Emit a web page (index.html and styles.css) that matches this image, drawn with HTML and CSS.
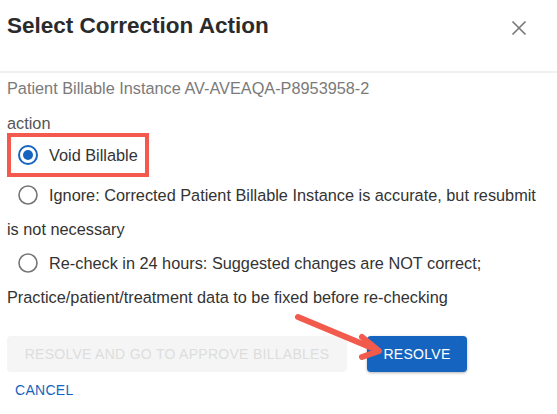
FILE: index.html
```html
<!DOCTYPE html>
<html lang="en">
<head>
<meta charset="utf-8">
<title>Select Correction Action</title>
<link rel="stylesheet" href="styles.css">
</head>
<body>
<div class="dialog">
  <header class="dialog-header">
    <h2 class="dialog-title">Select Correction Action</h2>
    <button class="close-btn" aria-label="Close">
      <svg viewBox="0 0 24 24" width="24" height="24"><path d="M5.5 5.5 L18.5 18.5 M18.5 5.5 L5.5 18.5" stroke="#7a7a7a" stroke-width="1.7" fill="none"/></svg>
    </button>
  </header>
  <div class="dialog-body">
    <p class="instance">Patient Billable Instance AV-AVEAQA-P8953958-2</p>
    <div class="field-label">action</div>
    <div class="options">
      <label class="option option-first">
        <span class="radio checked"><svg viewBox="0 0 24 24" width="24" height="24"><circle cx="12" cy="12" r="9" fill="none" stroke="#1565c0" stroke-width="2"/><circle cx="12" cy="12" r="5" fill="#1565c0"/></svg></span>Void Billable
        <span class="highlight"></span>
      </label>
      <label class="option">
        <span class="radio"><svg viewBox="0 0 24 24" width="24" height="24"><circle cx="12" cy="12" r="9" fill="none" stroke="#757575" stroke-width="1.6"/></svg></span>Ignore: Corrected Patient Billable Instance is accurate, but resubmit is not necessary
      </label>
      <label class="option">
        <span class="radio"><svg viewBox="0 0 24 24" width="24" height="24"><circle cx="12" cy="12" r="9" fill="none" stroke="#757575" stroke-width="1.6"/></svg></span>Re-check in 24 hours: Suggested changes are NOT correct; Practice/patient/treatment data to be fixed before re-checking
      </label>
    </div>
  </div>
  <div class="actions">
    <div class="action-row">
      <button class="btn btn-disabled" disabled>Resolve and go to approve billables</button>
      <button class="btn btn-primary">Resolve</button>
    </div>
    <button class="btn btn-text">Cancel</button>
  </div>
  <svg class="arrow" width="557" height="414" viewBox="0 0 557 414">
    <g stroke="#f25a4c" stroke-width="6" stroke-linecap="round" stroke-linejoin="round" fill="none">
      <path d="M298 317 L377 350"/>
      <path d="M362 337 L379 351 L362 357"/>
    </g>
  </svg>
</div>
</body>
</html>
```

FILE: styles.css
```css
* { box-sizing: border-box; }

html, body {
  margin: 0;
  padding: 0;
  background: #ffffff;
}

body {
  font-family: "Liberation Sans", Arial, Helvetica, sans-serif;
  color: #333333;
}

.dialog {
  position: relative;
  width: 557px;
  height: 414px;
  overflow: hidden;
  background: #ffffff;
}

.dialog-header {
  display: flex;
  justify-content: space-between;
  align-items: flex-start;
  height: 73px;
  padding: 13px 26px 0 7px;
  border-bottom: 2px solid #f0f0f0;
}

.dialog-title {
  margin: 0;
  font-size: 22.5px;
  line-height: 26px;
  font-weight: 700;
  color: #2b2b2b;
}

.close-btn {
  display: flex;
  padding: 0;
  margin-top: 3px;
  border: none;
  background: transparent;
  cursor: pointer;
}

.dialog-body {
  padding: 0 12px 0 7px;
}

.instance {
  margin: 3px 0 0;
  font-size: 16.3px;
  line-height: 24px;
  color: #7a7a7a;
}

.field-label {
  margin-top: 11px;
  font-size: 16.3px;
  line-height: 24px;
  color: #555555;
}

.options {
  margin-top: 3px;
}

.option {
  position: relative;
  display: block;
  font-size: 16.3px;
  line-height: 34px;
  color: #333333;
}

.option-first {
  margin-bottom: 6px;
}

.radio {
  display: inline-flex;
  align-items: center;
  justify-content: center;
  width: 42px;
  height: 34px;
  vertical-align: top;
}

.radio svg {
  display: block;
}

.highlight {
  position: absolute;
  left: 0;
  top: -5px;
  width: 142px;
  height: 44px;
  border: 4px solid #f35a4d;
}

.actions {
  padding: 22px 7px 0;
}

.action-row {
  display: flex;
  gap: 20px;
}

.btn {
  height: 36px;
  padding: 0 16px;
  border: none;
  border-radius: 4px;
  font-family: "Liberation Sans", Arial, Helvetica, sans-serif;
  font-size: 14px;
  letter-spacing: 0.02em;
  text-transform: uppercase;
  background: transparent;
  cursor: pointer;
}

.btn-disabled {
  width: 340px;
  background: #f5f5f5;
  color: #dddddd;
  cursor: default;
}

.btn-primary {
  width: 100px;
  background: #1565c0;
  color: #ffffff;
  box-shadow: 0 1px 3px rgba(0, 0, 0, 0.3);
}

.btn-text {
  padding: 0 8px;
  color: #1565c0;
}

.arrow {
  position: absolute;
  left: 0;
  top: 0;
  pointer-events: none;
}
```
